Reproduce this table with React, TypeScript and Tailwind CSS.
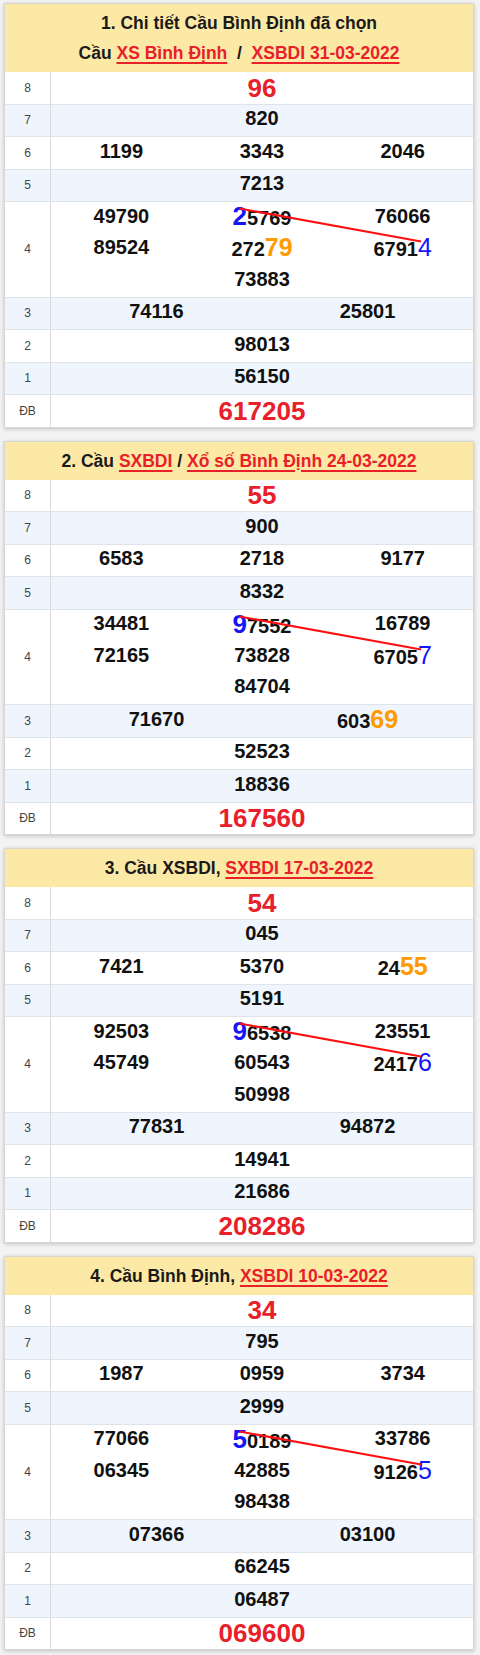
import React from 'react';

// {x} = blue bold, <x> = blue regular, (x) = orange bold
type Card = {
  title: React.ReactNode;
  g8: string;
  g7: string;
  g6: string[];
  g5: string;
  g4: string[][];
  g3: string[];
  g2: string;
  g1: string;
  db: string;
};

const Link = ({ children }: { children: React.ReactNode }) => (
  <span className="text-[#e8202a] underline decoration-[1.5px] underline-offset-[3px]">{children}</span>
);

const cards: Card[] = [
  {
    title: (
      <>
        <div>1. Chi tiết Cầu Bình Định đã chọn</div>
        <div>
          Cầu <Link>XS Bình Định</Link> &nbsp;/&nbsp; <Link>XSBDI 31-03-2022</Link>
        </div>
      </>
    ),
    g8: '96',
    g7: '820',
    g6: ['1199', '3343', '2046'],
    g5: '7213',
    g4: [
      ['49790', '{2}5769', '76066'],
      ['89524', '272(79)', '6791<4>'],
      ['', '73883', ''],
    ],
    g3: ['74116', '25801'],
    g2: '98013',
    g1: '56150',
    db: '617205',
  },
  {
    title: (
      <div>
        2. Cầu <Link>SXBDI</Link> / <Link>Xổ số Bình Định 24-03-2022</Link>
      </div>
    ),
    g8: '55',
    g7: '900',
    g6: ['6583', '2718', '9177'],
    g5: '8332',
    g4: [
      ['34481', '{9}7552', '16789'],
      ['72165', '73828', '6705<7>'],
      ['', '84704', ''],
    ],
    g3: ['71670', '603(69)'],
    g2: '52523',
    g1: '18836',
    db: '167560',
  },
  {
    title: (
      <div>
        3. Cầu XSBDI, <Link>SXBDI 17-03-2022</Link>
      </div>
    ),
    g8: '54',
    g7: '045',
    g6: ['7421', '5370', '24(55)'],
    g5: '5191',
    g4: [
      ['92503', '{9}6538', '23551'],
      ['45749', '60543', '2417<6>'],
      ['', '50998', ''],
    ],
    g3: ['77831', '94872'],
    g2: '14941',
    g1: '21686',
    db: '208286',
  },
  {
    title: (
      <div>
        4. Cầu Bình Định, <Link>XSBDI 10-03-2022</Link>
      </div>
    ),
    g8: '34',
    g7: '795',
    g6: ['1987', '0959', '3734'],
    g5: '2999',
    g4: [
      ['77066', '{5}0189', '33786'],
      ['06345', '42885', '9126<5>'],
      ['', '98438', ''],
    ],
    g3: ['07366', '03100'],
    g2: '66245',
    g1: '06487',
    db: '069600',
  },
];

function Num({ v }: { v: string }) {
  const parts = v.split(/(\{[^}]*\}|<[^>]*>|\([^)]*\))/).filter(Boolean);
  return (
    <span className="text-[20px] font-bold text-[#111] leading-none">
      {parts.map((p, i) => {
        if (p.startsWith('{'))
          return (
            <span key={i} className="text-[26px] text-[#1515f5]">
              {p.slice(1, -1)}
            </span>
          );
        if (p.startsWith('<'))
          return (
            <span key={i} className="text-[25px] font-normal text-[#1515f5]">
              {p.slice(1, -1)}
            </span>
          );
        if (p.startsWith('('))
          return (
            <span key={i} className="text-[25px] text-[#ff9a00]">
              {p.slice(1, -1)}
            </span>
          );
        return <span key={i}>{p}</span>;
      })}
    </span>
  );
}

function Row({
  label,
  zebra,
  last,
  children,
}: {
  label: string;
  zebra?: boolean;
  last?: boolean;
  children: React.ReactNode;
}) {
  return (
    <div className={`flex ${last ? '' : 'border-b border-[#dfe4ea]'} ${zebra ? 'bg-[#eef5fd]' : 'bg-white'}`}>
      <div className="w-[46px] shrink-0 border-r border-[#dadada] flex items-center justify-center text-[12px] text-[#444]">
        {label}
      </div>
      <div className="flex-1 min-w-0">{children}</div>
    </div>
  );
}

function Cells({ items, big, red }: { items: string[]; big?: boolean; red?: boolean }) {
  return (
    <div
      className={`h-[31.5px] grid items-center text-center ${
        items.length === 3 ? 'grid-cols-3' : items.length === 2 ? 'grid-cols-2' : 'grid-cols-1'
      }`}
    >
      {items.map((v, i) =>
        big ? (
          <span key={i} className={`text-[26px] font-bold leading-none ${red ? 'text-[#e8202a]' : ''}`}>
            {v}
          </span>
        ) : (
          <div key={i}>
            <Num v={v} />
          </div>
        )
      )}
    </div>
  );
}

function LotteryCard({ c }: { c: Card }) {
  return (
    <div className="border border-[#d6d6d6] bg-white shadow-[0_1px_4px_rgba(0,0,0,0.22)]">
      <div className="bg-[#fde9a6] py-[4px] text-center text-[17.5px] font-bold leading-[30px] text-[#1a1a1a]">
        {c.title}
      </div>
      <Row label="8">
        <Cells items={[c.g8]} big red />
      </Row>
      <Row label="7" zebra>
        <Cells items={[c.g7]} />
      </Row>
      <Row label="6">
        <Cells items={c.g6} />
      </Row>
      <Row label="5" zebra>
        <Cells items={[c.g5]} />
      </Row>
      <Row label="4">
        <div className="relative">
          {c.g4.map((line, i) => (
            <Cells key={i} items={line} />
          ))}
          <svg className="absolute left-0 top-0 h-full w-full pointer-events-none" aria-hidden>
            <line x1="188.5" y1="6.5" x2="370" y2="39.5" stroke="#ff1010" strokeWidth="2" />
          </svg>
        </div>
      </Row>
      <Row label="3" zebra>
        <Cells items={c.g3} />
      </Row>
      <Row label="2">
        <Cells items={[c.g2]} />
      </Row>
      <Row label="1" zebra>
        <Cells items={[c.g1]} />
      </Row>
      <Row label="ĐB" last>
        <Cells items={[c.db]} big red />
      </Row>
    </div>
  );
}

export default function App() {
  return (
    <div className="min-h-screen bg-[#f3f3f3] font-['Liberation_Sans',Arial,sans-serif] pt-[3px] pb-[4px] pl-[4px] pr-[6px]">
      <div className="flex flex-col gap-[13px]">
        {cards.map((c, i) => (
          <LotteryCard key={i} c={c} />
        ))}
      </div>
    </div>
  );
}
